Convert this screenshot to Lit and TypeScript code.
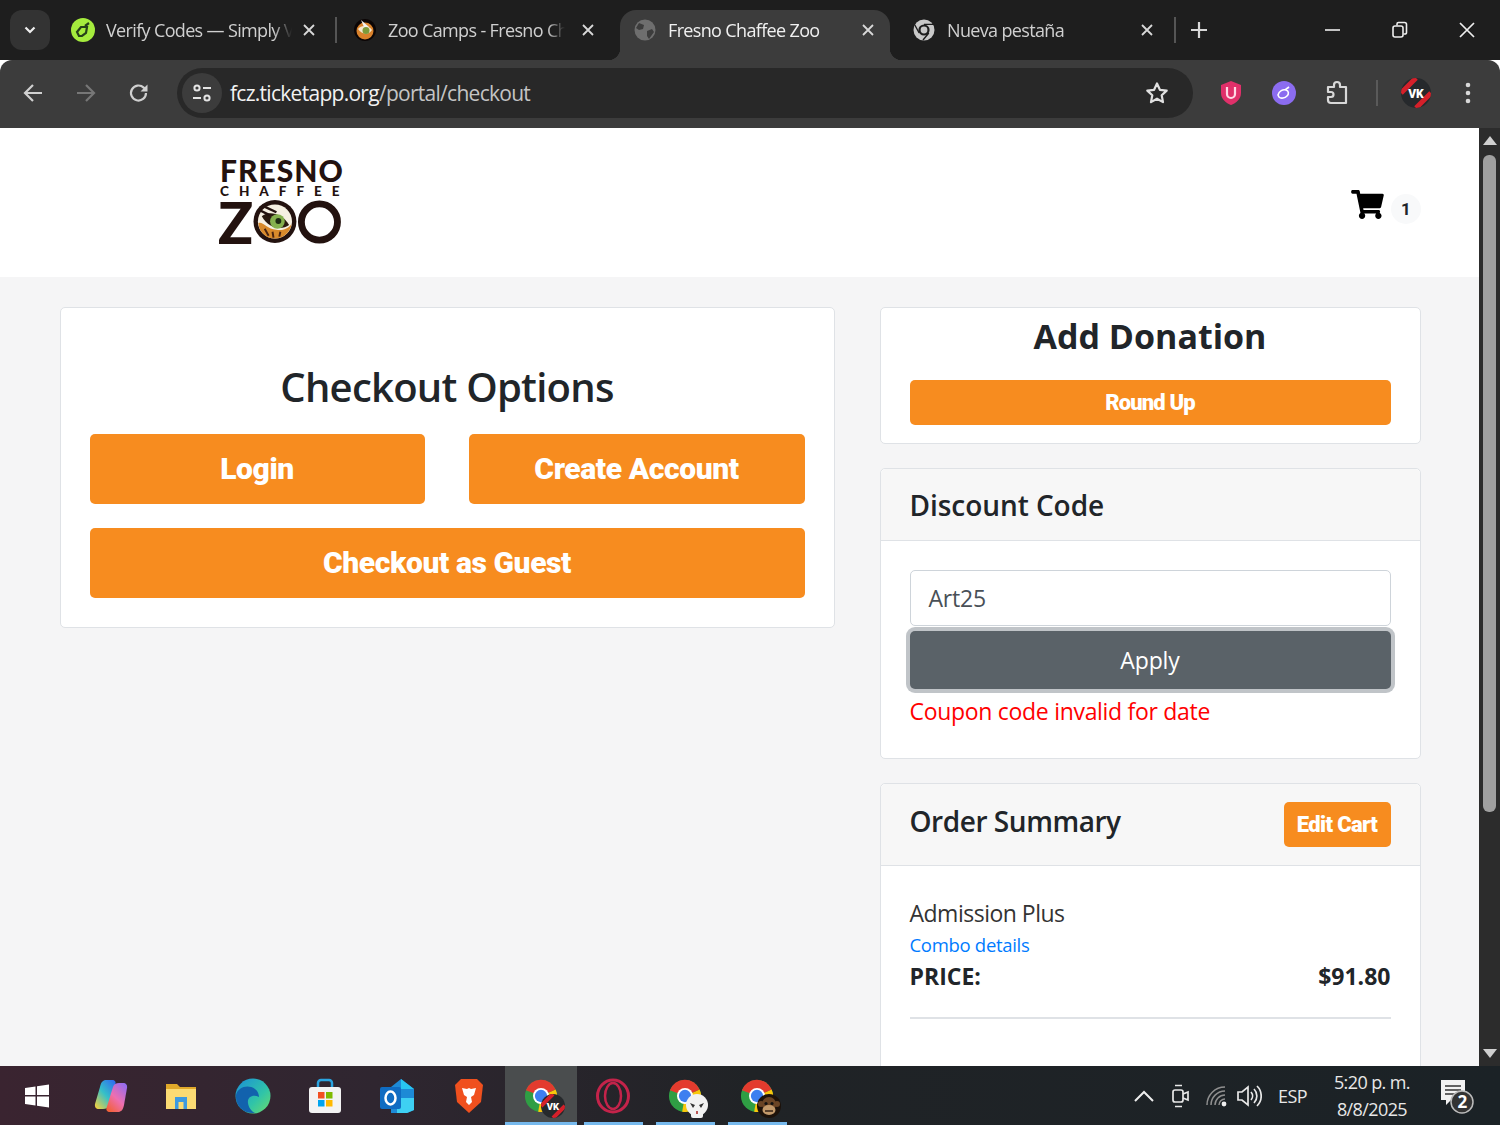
import { LitElement, html, css } from "lit";
import { customElement } from "lit/decorators.js";

const chromeIcon = (size: number) => html`<svg width=${size} height=${size} viewBox="0 0 36 36">
  <circle cx="18" cy="18" r="17" fill="#2f9e44"/>
  <path d="M18 18 L33.500 11 A17 17 0 0 1 15 34.700 Z" fill="#f9c70c"/>
  <path d="M18 18 L2 12 A17 17 0 0 1 33.500 11 Z" fill="#e33b2e"/>
  <circle cx="18" cy="18" r="8.500" fill="#fff"/><circle cx="18" cy="18" r="6.500" fill="#3d7ff0"/>
</svg>`;

const close = html`<svg class="tabx" width="14" height="14" viewBox="0 0 14 14"><path d="M2 2L12 12M12 2L2 12" stroke="currentColor" stroke-width="1.800" fill="none"/></svg>`;

@customElement("app-root")
export class AppRoot extends LitElement {
  static styles = css`
    :host { display: block; width: 1500px; height: 1125px; overflow: hidden; font-family: "Open Sans", "Noto Sans", sans-serif; }
    * { box-sizing: border-box; }
    .window { display: flex; flex-direction: column; height: 1125px; }

    .tabstrip { height: 60px; flex: none; background: #1e1e1e; display: flex; align-items: flex-end; padding-left: 10px; color: #d0d0d0; font-size: 18px; letter-spacing: -0.65px; }
    .tabmenu { width: 40px; height: 40px; margin-bottom: 10px; border-radius: 12px; background: #333; display: flex; align-items: center; justify-content: center; }
    .tab { height: 50px; display: flex; align-items: center; flex: none; padding-bottom: 10px; position: relative; }
    .tab .title { flex: 1; min-width: 0; overflow: hidden; white-space: nowrap; -webkit-mask-image: linear-gradient(to right, #000 90%, transparent); mask-image: linear-gradient(to right, #000 90%, transparent); }
    .t1 { width: 275px; margin-left: 10px; padding-left: 11px; padding-right: 19px; }
    .t2 { width: 283px; padding-left: 16px; padding-right: 25px; }
    .t2 .tabx { margin-left: 16px; }
    .t3 { width: 270px; background: #3c3c3c; border-radius: 16px 16px 0 0; padding-left: 13px; padding-right: 15px; color: #f0f0f0; }
    .t3::before, .t3::after { content: ""; position: absolute; bottom: 0; width: 12px; height: 12px; }
    .t3::before { left: -12px; background: radial-gradient(circle at 0 0, transparent 12px, #3c3c3c 12.500px); }
    .t3::after { right: -12px; background: radial-gradient(circle at 100% 0, transparent 12px, #3c3c3c 12.500px); }
    .t4 { width: 284px; padding-left: 22px; padding-right: 20px; }
    .fav { width: 24px; height: 24px; flex: none; margin-right: 11px; display: flex; }
    .tabx { flex: none; color: #d8d8d8; margin-left: 10px; }
    .vsep { width: 2px; height: 26px; background: #555; flex: none; margin-bottom: 17px; }
    .plus { flex: none; margin: 0 0 22px 15px; display: flex; }
    .winctl { margin-left: auto; display: flex; align-items: center; height: 60px; align-self: flex-start; color: #eee; padding-right: 24px; gap: 49px; }

    .toolbar { height: 68px; flex: none; background: #3c3c3c; border-radius: 12px 12px 0 0; display: flex; align-items: center; padding: 0 0 2px 22px; color: #c7c7c7; position: relative; }
    .navs { display: flex; gap: 31px; align-items: center; width: 133px; }
    .omni { width: 1016px; margin-left: 22px; height: 50px; border-radius: 25px; background: #282828; display: flex; align-items: center; padding: 0 24px 0 5px; flex: none; }
    .site { width: 40px; height: 40px; border-radius: 20px; background: #3c3c3c; display: flex; align-items: center; justify-content: center; margin-right: 8px; }
    .url { flex: 1; font-size: 21px; letter-spacing: -0.72px; color: #c4c4c4; }
    .url b { font-weight: 400; color: #f2f2f2; }
    .exts { display: flex; align-items: center; margin-left: 26px; gap: 29px; }
    .tsep { width: 2px; height: 26px; background: #5a5a5a; margin-left: -2px; }
    .avatar { margin-left: -7px; }
    .dots { margin-left: 4px; }

    .viewport { flex: 1; min-height: 0; display: flex; background: #f5f5f6; overflow: hidden; }
    .page { flex: 1; min-width: 0; }
    .scroll { width: 21px; flex: none; background: #2c2c2c; display: flex; flex-direction: column; align-items: center; padding: 8px 0; }
    .thumb { width: 13px; height: 657px; background: #a0a0a0; border-radius: 6px; margin: 10px 0 auto; }

    header { height: 149px; background: #fff; display: flex; align-items: center; justify-content: space-between; padding: 0 58px 0 218px; }
    .logo { width: 124px; color: #23120f; display: flex; flex-direction: column; align-items: stretch; margin-top: -3px; font-family: "Lato", sans-serif; font-weight: 900; line-height: 1; }
    .l1 { font-size: 30px; letter-spacing: 1px; line-height: 29px; white-space: nowrap; padding-left: 2px; }
    .l2 { font-size: 13.500px; letter-spacing: 10px; line-height: 12px; white-space: nowrap; padding-left: 2px; }
    .l3 { display: flex; align-items: center; height: 49px; justify-content: space-between; font-size: 58px; }
    .l3 span { line-height: 46px; }
    .cartwrap { display: flex; align-items: center; gap: 7px; margin-top: 4px; }
    .badge { width: 30px; height: 30px; border-radius: 50%; background: #f8f9fa; color: #212529; font: 700 17px "Roboto", sans-serif; display: flex; align-items: center; justify-content: center; margin-top: 8px; }

    .cols { display: grid; grid-template-columns: 775px 541px; gap: 45px; padding: 30px 0 0 60px; align-items: start; }
    .stack { display: flex; flex-direction: column; gap: 24px; }
    .card { background: #fff; border: 1.500px solid #dfe2e6; border-radius: 5px; }
    .options { padding: 28.500px; display: grid; grid-template-columns: 335px 336px; column-gap: 44px; row-gap: 24px; }
    .options h2 { grid-column: 1 / -1; margin: 0 0 -24px; padding: 27.500px 0 24px; font-size: 40px; line-height: 46px; text-align: center; font-weight: 600; color: #212529; letter-spacing: -0.75px; height: 97.500px; }
    .btn { background: #f78c1f; color: #fff; font-family: "Roboto", sans-serif; font-weight: 900; border-radius: 5px; display: flex; align-items: center; justify-content: center; }
    .big { height: 70px; font-size: 30px; letter-spacing: -0.4px; padding-bottom: 1px; }
    .wide { grid-column: 1 / -1; }
    .donate { padding: 0 29.500px 17px 28.500px; height: 137px; }
    .donate h3 { margin: 0; height: 72px; line-height: 56px; font-size: 34px; font-weight: 700; text-align: center; color: #212529; }
    .mid { height: 45px; font-size: 22px; letter-spacing: -0.85px; padding-bottom: 1px; }
    .chead { background: #f7f7f7; border-bottom: 1.500px solid #dfe2e6; padding: 0 29.500px 0 28.500px; display: flex; align-items: center; justify-content: space-between; border-radius: 5px 5px 0 0; }
    .chead h3 { margin: 0; font-size: 28px; font-weight: 600; color: #212529; letter-spacing: -0.05px; }
    .dhead { height: 72px; }
    .dbody { padding: 29px 29.500px 33px 28.500px; height: 217px; }
    .input { height: 56px; border: 1.500px solid #ced4da; border-radius: 5px; padding: 0 18px; display: flex; align-items: center; font-size: 23px; color: #495057; background: #fff; letter-spacing: -0.2px; }
    .apply { margin-top: 5px; height: 58px; border-radius: 5px; background: #5a6268; box-shadow: 0 0 0 4px rgba(130,138,145,.5); color: #fff; font-size: 23px; display: flex; align-items: center; justify-content: center; letter-spacing: -0.1px; }
    .err { margin-top: 2px; color: #ff0000; font-size: 23px; line-height: 40px; letter-spacing: -0.3px; }
    .ohead { height: 82px; }
    .ohead h3 { margin-bottom: 8px; letter-spacing: -0.45px; }
    .edit { width: 107px; height: 45px; font-size: 22px; letter-spacing: -0.65px; padding-bottom: 1px; }
    .obody { padding: 29px 29.500px 60px 28.500px; color: #212529; }
    .item { font-size: 23px; line-height: 36px; letter-spacing: -0.5px; color: #333; }
    .link { font-size: 18.500px; line-height: 28px; color: #007bff; letter-spacing: -0.3px; }
    .price { display: flex; justify-content: space-between; font-size: 23px; font-weight: 700; line-height: 34px; letter-spacing: 0; }
    .rule { height: 1.500px; background: #dfe2e6; margin-top: 24px; }

    .taskbar { height: 59px; flex: none; background: linear-gradient(90deg, #3a2430 0%, #2f2630 25%, #202326 50%, #1b2226 100%); display: flex; align-items: center; color: #eee; padding-left: 1px; }
    .tb { width: 72px; height: 59px; display: flex; align-items: center; justify-content: center; flex: none; position: relative; }
    .tb.on { background: #4a4d4e; }
    .tb.run::after { content: ""; position: absolute; left: 0; right: 0; bottom: 0; height: 3px; background: #76b9ed; }
    .tb.narrow::after { left: 7px; right: 6px; }
    .cop { padding-left: 3px; }
    .tray { margin-left: auto; display: flex; align-items: center; color: #e8e8e8; font-size: 18px; letter-spacing: -0.6px; }
    .clock { text-align: center; line-height: 27px; margin: 0 29px 0 27px; }
    .overlay { position: absolute; right: 12px; bottom: 7px; display: flex; }
    .chev { margin-right: 17px; }
    .cam { margin-right: 17px; }
    .wifi { margin-right: 8px; }
    .esp { margin-left: 16px; }
    .notif { margin-right: 25px; }
  `;

  render() {
    return html`<div class="window">
      <div class="tabstrip">
        <div class="tabmenu"><svg width="16" height="16" viewBox="0 0 16 16"><path d="M3.500 5.500L8 10L12.500 5.500" stroke="#eee" stroke-width="2.200" fill="none"/></svg></div>
        <div class="tab t1"><span class="fav"><svg width="24" height="24" viewBox="0 0 24 24"><circle cx="12" cy="12" r="12" fill="#a5ec3d"/><path d="M6 14l4-5h6l-1 6-4 3H8zM14 8l4-3" fill="none" stroke="#26401a" stroke-width="2.200"/></svg></span><span class="title">Verify Codes — Simply Verify</span>${close}</div>
        <div class="vsep"></div>
        <div class="tab t2"><span class="fav"><svg width="24" height="24" viewBox="0 0 24 24"><circle cx="12" cy="12" r="11" fill="#0b0505"/><circle cx="12" cy="13" r="8.500" fill="#d9822b"/><path d="M5 11C8 7 16 7 19 12 16 17 9 17 5 11Z" fill="#f4e7cf"/><circle cx="13" cy="12.500" r="3.500" fill="#7d9b3a"/><path d="M8 2l8 7-5 0z" fill="#f2f2f2"/></svg></span><span class="title">Zoo Camps - Fresno Chaffee Zoo</span>${close}</div>
        <div class="tab t3"><span class="fav"><svg width="24" height="24" viewBox="0 0 24 24"><circle cx="12" cy="12" r="10.500" fill="#6e6e6e"/><path d="M6 5l5 2-1 4-4 1-3-2zM14 13l5-2 2 3-5 7-2-3z" fill="#3c3c3c"/></svg></span><span class="title">Fresno Chaffee Zoo</span>${close}</div>
        <div class="tab t4"><span class="fav"><svg width="24" height="24" viewBox="0 0 24 24"><circle cx="12" cy="12" r="10.500" fill="#c9c9c9"/><circle cx="12" cy="12" r="5.600" fill="#1e1e1e"/><circle cx="12" cy="12" r="3.400" fill="#c9c9c9"/><path d="M12 6.400h9.400M7.200 15L2.800 7M16.800 15L11 22" stroke="#1e1e1e" stroke-width="1.400"/></svg></span><span class="title">Nueva pestaña</span>${close}</div>
        <div class="vsep"></div>
        <div class="plus"><svg width="16" height="16" viewBox="0 0 16 16"><path d="M8 0V16M0 8H16" stroke="#d8d8d8" stroke-width="2.200"/></svg></div>
        <div class="winctl">
          <svg width="18" height="18" viewBox="0 0 18 18"><path d="M1 9H16" stroke="currentColor" stroke-width="1.600"/></svg>
          <svg width="18" height="18" viewBox="0 0 18 18"><rect x="2" y="5" width="10" height="11" rx="2" fill="none" stroke="currentColor" stroke-width="1.600"/><path d="M6 4.500V3a1.500 1.500 0 0 1 1.500-1.500h6A2 2 0 0 1 15.500 3.500v8A1.500 1.500 0 0 1 14 13h-1.500" fill="none" stroke="currentColor" stroke-width="1.600"/></svg>
          <svg width="18" height="18" viewBox="0 0 18 18"><path d="M2 2L16 16M16 2L2 16" stroke="currentColor" stroke-width="1.700"/></svg>
        </div>
      </div>

      <div class="toolbar">
        <div class="navs">
          <svg width="22" height="22" viewBox="0 0 22 22"><path d="M20 11H3M11 3L3 11L11 19" fill="none" stroke="#d0d0d0" stroke-width="2.200"/></svg>
          <svg width="22" height="22" viewBox="0 0 22 22"><path d="M2 11H19M11 3L19 11L11 19" fill="none" stroke="#777" stroke-width="2.200"/></svg>
          <svg width="22" height="22" viewBox="0 0 22 22"><path d="M18 11a7.500 7.500 0 1 1-2.300-5.400L18 8" fill="none" stroke="#d0d0d0" stroke-width="2.200"/><path d="M19.500 2.500V9.500H12.500Z" fill="#d0d0d0"/></svg>
        </div>
        <div class="omni">
          <div class="site"><svg width="22" height="22" viewBox="0 0 22 22" fill="none" stroke="#e4e4e4" stroke-width="2"><circle cx="6" cy="6" r="2.600"/><path d="M12 6H20M2 16H10"/><circle cx="16" cy="16" r="2.600"/></svg></div>
          <div class="url"><b>fcz.ticketapp.org</b>/portal/checkout</div>
          <svg width="24" height="24" viewBox="0 0 24 24"><path d="M12 2.500l2.900 6.300 6.800.8-5 4.700 1.300 6.800-6-3.400-6 3.400 1.300-6.800-5-4.700 6.800-.8z" fill="none" stroke="#e0e0e0" stroke-width="2.200" stroke-linejoin="round"/></svg>
        </div>
        <div class="exts">
          <svg width="24" height="26" viewBox="0 0 24 26"><path d="M12 1L22 5V13C22 19 17 23 12 25C7 23 2 19 2 13V5Z" fill="#e0306a"/><path d="M8 7V14a4 4 0 0 0 8 0V7" fill="none" stroke="#ffd9e6" stroke-width="2.200"/></svg>
          <svg width="24" height="24" viewBox="0 0 24 24"><circle cx="12" cy="12" r="12" fill="#8b6cf0"/><path d="M6 14c1-4 5-6 8-5s3 4 1 6-6 3-8 1zM13 9l4-3" fill="none" stroke="#fff" stroke-width="1.600"/></svg>
          <svg width="24" height="26" viewBox="0 0 24 26"><path d="M3 7H9V5a3 3 0 0 1 6 0V7H21V23H6A3 3 0 0 1 3 20V17H6a2.500 2.500 0 0 0 0-5H3Z" fill="none" stroke="#d8d8d8" stroke-width="2.200" stroke-linejoin="round"/></svg>
          <div class="tsep"></div>
          <svg class="avatar" width="32" height="32" viewBox="0 0 32 32"><defs><clipPath id="av"><circle cx="16" cy="16" r="15"/></clipPath></defs><circle cx="16" cy="16" r="15" fill="#26292c"/><g clip-path="url(#av)"><path d="M1 16L16 1M16 31L31 16" stroke="#d5202a" stroke-width="5"/></g><text x="16" y="21" text-anchor="middle" font-family="Roboto" font-weight="900" font-size="12" fill="#fff">VK</text></svg>
          <svg class="dots" width="6" height="22" viewBox="0 0 6 22"><circle cx="3" cy="3" r="2.300" fill="#d8d8d8"/><circle cx="3" cy="11" r="2.300" fill="#d8d8d8"/><circle cx="3" cy="19" r="2.300" fill="#d8d8d8"/></svg>
        </div>
      </div>

      <div class="viewport">
        <div class="page">
          <header>
            <div class="logo">
              <div class="l1">FRESNO</div>
              <div class="l2">CHAFFEE</div>
              <div class="l3"><span>Z</span>
                <svg width="45" height="45" viewBox="0 0 45 45"><circle cx="22.500" cy="22.500" r="22" fill="#23120f"/><circle cx="22.500" cy="22.500" r="17.500" fill="#f6f0e2"/><path d="M5.500 24C10 22 14 30 24 31 30 32 36 30 39.500 25 38 34 31 40 22.500 40 13 40 6 33 5.500 24Z" fill="#d88a2b"/><path d="M12 30l4 7M20 33l1 6M28 33l-1 5" stroke="#4a2410" stroke-width="2"/><path d="M9 17C16 11 30 14 37 26 30 31 17 31 9 17Z" fill="#2a1a10"/><circle cx="25" cy="22.500" r="7.500" fill="#85b04e"/><circle cx="26" cy="22" r="3" fill="#1d2a12"/><path d="M9 6L24 13M7 11L17 16" stroke="#23120f" stroke-width="2.500"/></svg>
                <svg width="46" height="46" viewBox="0 0 46 46"><circle cx="23" cy="23" r="18.500" fill="none" stroke="#23120f" stroke-width="7"/></svg>
              </div>
            </div>
            <div class="cartwrap">
              <svg width="33" height="29" viewBox="0 0 576 512"><path fill="#000" d="M528.12 301.319l47.273-208C578.806 78.301 567.391 64 551.99 64H159.208l-9.166-44.81C147.758 8.021 137.93 0 126.529 0H24C10.745 0 0 10.745 0 24v16c0 13.255 10.745 24 24 24h69.883l70.248 343.435C147.325 417.1 136 435.222 136 456c0 30.928 25.072 56 56 56s56-25.072 56-56c0-15.674-6.447-29.835-16.824-40h209.647C430.447 426.165 424 440.326 424 456c0 30.928 25.072 56 56 56s56-25.072 56-56c0-22.172-12.888-41.332-31.579-50.405l5.517-24.276c3.413-15.018-8.002-29.319-23.403-29.319H218.117l-6.545-32h293.145c11.206 0 20.92-7.754 23.403-18.681z"/></svg>
              <div class="badge">1</div>
            </div>
          </header>
          <div class="cols">
            <section class="card options">
              <h2>Checkout Options</h2>
              <div class="btn big">Login</div>
              <div class="btn big">Create Account</div>
              <div class="btn big wide">Checkout as Guest</div>
            </section>
            <div class="stack">
              <section class="card donate">
                <h3>Add Donation</h3>
                <div class="btn mid">Round Up</div>
              </section>
              <section class="card">
                <div class="chead dhead"><h3>Discount Code</h3></div>
                <div class="dbody">
                  <div class="input">Art25</div>
                  <div class="apply">Apply</div>
                  <div class="err">Coupon code invalid for date</div>
                </div>
              </section>
              <section class="card">
                <div class="chead ohead"><h3>Order Summary</h3><div class="btn edit">Edit Cart</div></div>
                <div class="obody">
                  <div class="item">Admission Plus</div>
                  <div class="link">Combo details</div>
                  <div class="price"><span>PRICE:</span><span>$91.80</span></div>
                  <div class="rule"></div>
                </div>
              </section>
            </div>
          </div>
        </div>
        <div class="scroll">
          <svg width="14" height="9" viewBox="0 0 14 9"><path d="M7 0L14 9H0Z" fill="#d0d0d0"/></svg>
          <div class="thumb"></div>
          <svg width="14" height="9" viewBox="0 0 14 9"><path d="M7 9L14 0H0Z" fill="#d0d0d0"/></svg>
        </div>
      </div>

      <div class="taskbar">
        <div class="tb"><svg width="26" height="26" viewBox="0 0 26 26" fill="#fff"><path d="M1 5L11.500 3.500V12H1ZM13 3.200L25 1.500V12H13ZM1 13.500H11.500V22.500L1 21ZM13 13.500H25V24.500L13 22.800Z"/></svg></div>
        <div class="tb cop"><svg width="34" height="34" viewBox="0 0 34 34">
          <defs>
            <linearGradient id="cp1" x1="0.900" y1="0" x2="0.100" y2="1"><stop offset="0" stop-color="#2f6df0"/><stop offset=".5" stop-color="#35c0c8"/><stop offset="1" stop-color="#f0d040"/></linearGradient>
            <linearGradient id="cp2" x1="0.900" y1="0" x2="0.200" y2="1"><stop offset="0" stop-color="#8f6cf2"/><stop offset=".55" stop-color="#ee6fb0"/><stop offset="1" stop-color="#f2613a"/></linearGradient>
          </defs>
          <path d="M12 1H18C21 1 22 3 21.500 5L15 26C14 29 12 30 9 30H5C2 30 0.500 28 1 25L6 8C7 3 9 1 12 1Z" fill="url(#cp1)"/>
          <path d="M24 33H16C13 33 12 31 12.500 29L19 8C20 5 22 4 25 4H29C32 4 33.500 6 33 9L30 26C29 31 27 33 24 33Z" fill="url(#cp2)"/>
        </svg></div>
        <div class="tb"><svg width="32" height="30" viewBox="0 0 32 30"><path d="M1 3H12L15 6H31V28H1Z" fill="#e0a92a"/><path d="M1 8H31V28H1Z" fill="#fbdb73"/><path d="M10 16H22V28H18.500V21H13.500V28H10Z" fill="#3d9ae0"/></svg></div>
        <div class="tb"><svg width="36" height="36" viewBox="0 0 36 36">
          <defs>
            <linearGradient id="ed1" x1="0" y1="0" x2="1" y2="1"><stop offset="0" stop-color="#1a8fd8"/><stop offset=".6" stop-color="#30c4a8"/><stop offset="1" stop-color="#6ddc6a"/></linearGradient>
          </defs>
          <circle cx="18" cy="18" r="17.500" fill="url(#ed1)"/>
          <path d="M1 17C3 9 13 6 20 11 23 13 24 17 24 19 18 16 12 19 13 25 13.500 29 16 33 20 35 9 36 0 28 1 17Z" fill="#1262ad"/>
        </svg></div>
        <div class="tb"><svg width="34" height="36" viewBox="0 0 34 36"><path d="M10 10V5a3 3 0 0 1 3-3h8a3 3 0 0 1 3 3V10" fill="none" stroke="#2aa4e0" stroke-width="2.500"/><rect x="1" y="9" width="32" height="26" rx="3" fill="#f3f3f3"/><rect x="10" y="14" width="6.500" height="6.500" fill="#f25022"/><rect x="18" y="14" width="6.500" height="6.500" fill="#7fba00"/><rect x="10" y="22" width="6.500" height="6.500" fill="#00a4ef"/><rect x="18" y="22" width="6.500" height="6.500" fill="#ffb900"/></svg></div>
        <div class="tb"><svg width="36" height="36" viewBox="0 0 36 36"><path d="M22 1L35 11V32L28 35H12V9Z" fill="#1d8ad6"/><path d="M22 1L35 11H22Z" fill="#28c5f0"/><path d="M18 20H35V32L28 35H18Z" fill="#3ed0f3"/><rect x="1" y="9" width="21" height="22" rx="2" fill="#0f6cc2"/><ellipse cx="11.500" cy="20" rx="5" ry="6.500" fill="none" stroke="#fff" stroke-width="2.500"/></svg></div>
        <div class="tb"><svg width="30" height="36" viewBox="0 0 30 36"><path d="M7 1H23L29 7 27 24 15 35 3 24 1 7Z" fill="#f0501e"/><path d="M8 10l5 1 2-1 2 1 5-1-2 7-3 2 1 5-3 3-3-3 1-5-3-2z" fill="#fff"/></svg></div>
        <div class="tb on run">${chromeIcon(34)}<span class="overlay"><svg width="24" height="24" viewBox="0 0 24 24"><defs><clipPath id="ov"><circle cx="12" cy="12" r="12"/></clipPath></defs><circle cx="12" cy="12" r="12" fill="#26292c"/><g clip-path="url(#ov)"><path d="M0 12L12 0M12 24L24 12" stroke="#d5202a" stroke-width="4"/></g><text x="12" y="16" text-anchor="middle" font-family="Roboto" font-weight="900" font-size="9.500" fill="#fff">VK</text></svg></span></div>
        <div class="tb run narrow"><svg width="36" height="36" viewBox="0 0 36 36"><ellipse cx="18" cy="18" rx="15.500" ry="16" fill="none" stroke="#c4234a" stroke-width="3"/><ellipse cx="18" cy="18" rx="8" ry="13" fill="none" stroke="#c4234a" stroke-width="2.500"/></svg></div>
        <div class="tb run narrow">${chromeIcon(34)}<span class="overlay"><svg width="24" height="24" viewBox="0 0 24 24"><circle cx="12" cy="11" r="11" fill="#f2f2f2"/><rect x="6" y="17" width="12" height="7" rx="2" fill="#f2f2f2"/><path d="M5 9l5 2-2 3zM19 9l-5 2 2 3z" fill="#333"/><path d="M11 17h2v3h-2z" fill="#b55"/></svg></span></div>
        <div class="tb run narrow">${chromeIcon(34)}<span class="overlay"><svg width="24" height="24" viewBox="0 0 24 24"><circle cx="12" cy="12" r="12" fill="#1d120a"/><circle cx="4" cy="10" r="3" fill="#6b4525"/><circle cx="20" cy="10" r="3" fill="#6b4525"/><circle cx="12" cy="10" r="7" fill="#6b4525"/><ellipse cx="12" cy="16" rx="6.500" ry="5" fill="#c39a6b"/><circle cx="9" cy="9.500" r="1.600" fill="#111"/><circle cx="15" cy="9.500" r="1.600" fill="#111"/><path d="M8 17H16" stroke="#2a1a10" stroke-width="1.400"/></svg></span></div>
        <div class="tray">
          <svg class="chev" width="20" height="12" viewBox="0 0 20 12"><path d="M1 11L10 2L19 11" fill="none" stroke="#eee" stroke-width="2"/></svg>
          <svg class="cam" width="18" height="26" viewBox="0 0 18 26" fill="none" stroke="#e8e8e8" stroke-width="1.700"><rect x="2" y="7" width="10" height="12" rx="2"/><path d="M12 11L17 9V17L12 15M4 2.500H11M4 23.500H11"/></svg>
          <svg class="wifi" width="22" height="22" viewBox="0 0 22 22" fill="none" stroke="#8f8f8f" stroke-width="1.500"><path d="M1 20A18 18 0 0 1 19 2M5 20A14 14 0 0 1 19 6M9 20A10 10 0 0 1 19 10M13 20A6 6 0 0 1 19 14"/><circle cx="18" cy="19" r="2.400" fill="#eee" stroke="none"/></svg>
          <svg width="26" height="24" viewBox="0 0 26 24" fill="none" stroke="#e8e8e8" stroke-width="1.700"><path d="M2 8H6L12 3V21L6 16H2Z"/><path d="M15 8a6 6 0 0 1 0 8M18 5a10 10 0 0 1 0 14M21 2a14 14 0 0 1 0 20"/></svg>
          <span class="esp">ESP</span>
          <div class="clock">5:20 p. m.<br/>8/8/2025</div>
          <svg class="notif" width="36" height="36" viewBox="0 0 36 36"><path d="M2 2H26V22H12L7 27V22H2Z" fill="#f2f2f2"/><path d="M6 8H22M6 12H22M6 16H22" stroke="#333" stroke-width="1.500"/><circle cx="23" cy="24" r="11" fill="#333" stroke="#bbb" stroke-width="1.500"/><text x="23" y="30" text-anchor="middle" font-family="Open Sans" font-weight="700" font-size="17" fill="#fff">2</text></svg>
        </div>
      </div>
    </div>`;
  }
}
